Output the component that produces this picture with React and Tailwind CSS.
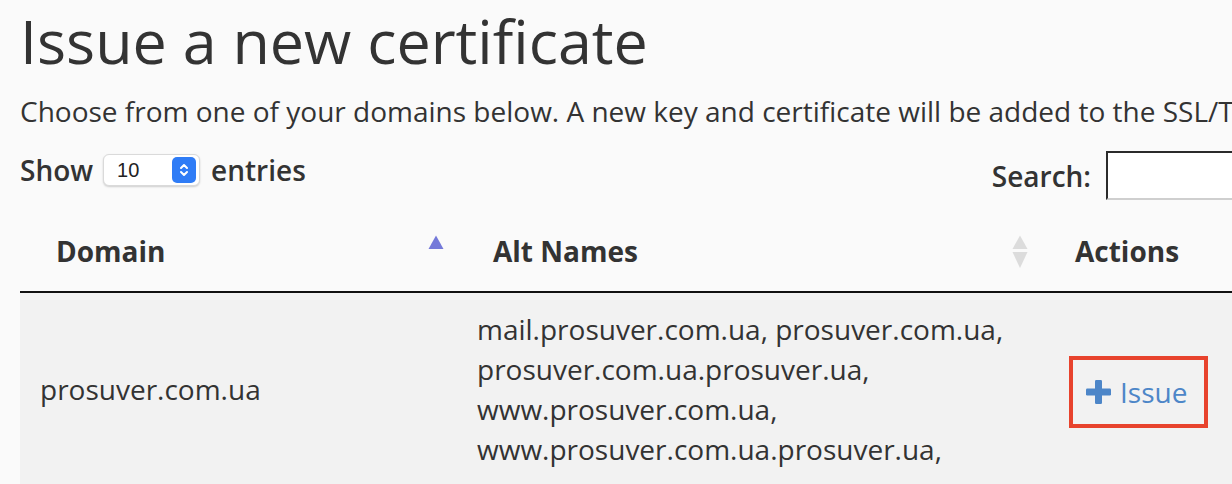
import React from "react";

function SortAsc() {
  return (
    <svg width="16" height="14" viewBox="0 0 16 14" className="absolute right-[13px] top-[24px]">
      <polygon points="8,0.5 15.5,14 0.5,14" fill="#7479d9" />
    </svg>
  );
}

function SortBoth() {
  return (
    <svg width="16" height="34" viewBox="0 0 16 34" className="absolute right-[11px] top-[24px]">
      <polygon points="8,0.5 15.5,14 0.5,14" fill="#dcdcdc" />
      <polygon points="0.5,17 15.5,17 8,33" fill="#dcdcdc" />
    </svg>
  );
}

function PlusIcon() {
  return (
    <svg width="25" height="24" viewBox="0 0 25 24" className="shrink-0">
      <rect x="0" y="8.5" width="25" height="7" rx="1.2" fill="#4d86c8" />
      <rect x="9" y="0" width="7" height="24" rx="1.2" fill="#4d86c8" />
    </svg>
  );
}

function EntriesSelect() {
  return (
    <div className="flex h-8 w-[97px] items-center justify-between rounded-[6px] border border-[#dadada] bg-white pl-[13px] pr-[3px] shadow-[0_1px_2px_rgba(0,0,0,0.18)]">
      <span className="font-['Liberation_Sans',sans-serif] text-[20px] font-normal leading-none text-[#222]">10</span>
      <span className="flex h-[26px] w-6 items-center justify-center rounded-[5px] bg-[#2f7cf6]">
        <svg width="12" height="18" viewBox="0 0 12 18" fill="none" stroke="white" strokeWidth="2" strokeLinecap="round" strokeLinejoin="round">
          <polyline points="3,7 6,4 9,7" />
          <polyline points="3,11 6,14 9,11" />
        </svg>
      </span>
    </div>
  );
}

const altNames = [
  "mail.prosuver.com.ua, prosuver.com.ua,",
  "prosuver.com.ua.prosuver.ua,",
  "www.prosuver.com.ua,",
  "www.prosuver.com.ua.prosuver.ua,",
];

export default function App() {
  return (
    <main className="min-h-screen overflow-hidden bg-[#fafafa] font-['Open_Sans',sans-serif] text-[#333]">
      <div className="w-[1300px] pl-5">
        <h1 className="mt-[8px] text-[61px] font-normal leading-[66px]">Issue a new certificate</h1>
        <p className="mt-[24px] whitespace-nowrap text-[28px] leading-[26px]">
          Choose from one of your domains below. A new key and certificate will be added to the SSL/TLS Manager.
        </p>

        <div className="mt-[27px] flex items-start justify-between">
          <div className="mt-[3px] flex items-center text-[28px] font-semibold leading-[30px]">
            <span>Show</span>
            <span className="ml-[10px] mr-[11px]">
              <EntriesSelect />
            </span>
            <span>entries</span>
          </div>
          <div className="flex items-start">
            <span className="mt-[5px] text-[28px] font-semibold leading-[40px]">Search:</span>
            <input
              type="search"
              className="ml-[15px] h-[49px] w-[194px] border-2 border-[#2b2b2b] border-b-[#cfcfcf] border-r-[#cfcfcf] bg-white outline-none"
            />
          </div>
        </div>

        <table className="mt-[11px] w-[1280px] table-fixed border-collapse text-left text-[28px] leading-[40px]">
          <colgroup>
            <col className="w-[437px]" />
            <col className="w-[582px]" />
            <col />
          </colgroup>
          <thead>
            <tr className="border-b-2 border-[#111]">
              <th className="relative px-9 py-5 font-bold">
                Domain
                <SortAsc />
              </th>
              <th className="relative px-9 py-5 font-bold">
                Alt Names
                <SortBoth />
              </th>
              <th className="px-9 py-5 font-bold">Actions</th>
            </tr>
          </thead>
          <tbody>
            <tr className="bg-[#f2f2f2]">
              <td className="px-5 py-4 align-middle">prosuver.com.ua</td>
              <td className="px-5 py-4 align-middle">
                {altNames.map((n) => (
                  <span key={n} className="block whitespace-nowrap">
                    {n}
                  </span>
                ))}
              </td>
              <td className="px-5 py-4 align-middle">
                <a
                  href="#"
                  className="ml-[10px] mt-[6px] inline-flex items-center gap-[9px] border-4 border-[#e8432d] py-3 pl-[13px] pr-[17px] text-[#4d86c8]"
                >
                  <PlusIcon />
                  <span>Issue</span>
                </a>
              </td>
            </tr>
          </tbody>
        </table>
      </div>
    </main>
  );
}
